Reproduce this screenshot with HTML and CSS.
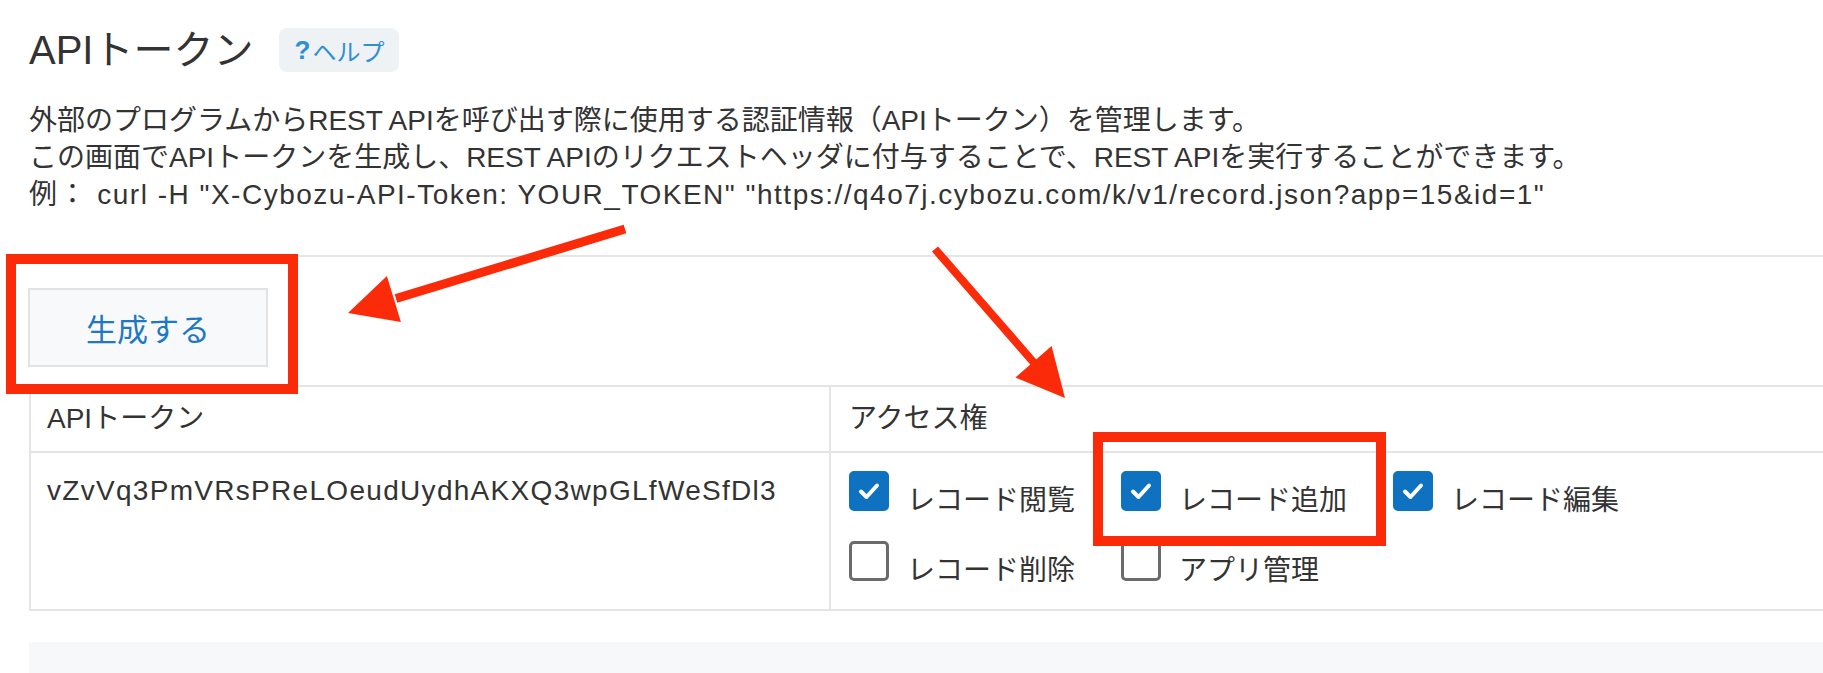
FILE: index.html
```html
<!DOCTYPE html>
<html lang="ja">
<head>
<meta charset="utf-8">
<title>APIトークン</title>
<link rel="stylesheet" href="styles.css">
</head>
<body>
<div class="page">
  <div class="title-row">
    <h1 class="title">APIトークン</h1>
    <a class="help"><span class="help-q">?</span>ヘルプ</a>
  </div>
  <div class="desc">
    <p>外部のプログラムからREST APIを呼び出す際に使用する認証情報（APIトークン）を管理します。</p>
    <p>この画面でAPIトークンを生成し、REST APIのリクエストヘッダに付与することで、REST APIを実行することができます。</p>
    <p class="example">例： curl -H "X-Cybozu-API-Token: YOUR_TOKEN" "https://q4o7j.cybozu.com/k/v1/record.json?app=15&amp;id=1"</p>
  </div>
  <div class="panel">
    <div class="toolbar">
      <button class="gen">生成する</button>
    </div>
    <table class="tokens">
      <thead>
        <tr><th class="col-token">APIトークン</th><th class="col-access">アクセス権</th></tr>
      </thead>
      <tbody>
        <tr>
          <td class="col-token"><span class="token">vZvVq3PmVRsPReLOeudUydhAKXQ3wpGLfWeSfDl3</span></td>
          <td class="col-access">
            <div class="perms">
              <label class="perm"><span class="cb on"><svg viewBox="0 0 40 40"><path d="M12 20.5 L17.5 26 L28 14.5"/></svg></span><span class="perm-label">レコード閲覧</span></label>
              <label class="perm"><span class="cb on"><svg viewBox="0 0 40 40"><path d="M12 20.5 L17.5 26 L28 14.5"/></svg></span><span class="perm-label">レコード追加</span></label>
              <label class="perm"><span class="cb on"><svg viewBox="0 0 40 40"><path d="M12 20.5 L17.5 26 L28 14.5"/></svg></span><span class="perm-label">レコード編集</span></label>
              <label class="perm"><span class="cb"></span><span class="perm-label">レコード削除</span></label>
              <label class="perm"><span class="cb"></span><span class="perm-label">アプリ管理</span></label>
            </div>
          </td>
        </tr>
      </tbody>
    </table>
    <div class="footer-bar"></div>
  </div>

  <svg class="annot" viewBox="0 0 1823 673" width="1823" height="673">
    <line x1="625" y1="229" x2="396" y2="298.5" class="shaft"/>
    <polygon points="348,313 386.9,276.1 400.9,322.1" class="head"/>
    <line x1="935" y1="249" x2="1035" y2="364" class="shaft thin"/>
    <polygon points="1065,398 1051.6,346 1015.4,377.6" class="head"/>
  </svg>
  <div class="mark mark-gen"></div>
  <div class="mark mark-add"></div>
</div>
</body>
</html>
```

FILE: styles.css
```css
html, body {
  margin: 0;
  padding: 0;
  background: #ffffff;
  overflow: hidden;
}

body {
  font-family: "Liberation Sans", "Noto Sans CJK JP", sans-serif;
  color: #333333;
  font-size: 28px;
}

.page {
  position: relative;
  width: 1823px;
  height: 673px;
  padding-left: 29px;
  box-sizing: border-box;
  overflow: hidden;
}

.title-row {
  display: flex;
  align-items: center;
  padding-top: 28px;
  height: 44px;
}

.title {
  margin: 0;
  font-size: 40px;
  font-weight: normal;
  line-height: 44px;
  color: #333333;
}

.help {
  margin-left: 26px;
  height: 44px;
  width: 120px;
  box-sizing: border-box;
  display: flex;
  align-items: center;
  justify-content: center;
  background: #eef2f5;
  border-radius: 8px;
  color: #2f8fd6;
  font-size: 24px;
}

.help-q {
  font-weight: bold;
  font-size: 26px;
  margin-right: 2px;
}

.desc {
  margin-top: 30px;
}

.desc p {
  margin: 0;
  line-height: 37px;
  white-space: nowrap;
}

.example {
  letter-spacing: 1.5px;
}

.token {
  letter-spacing: 1.3px;
}

.panel {
  margin-top: 42px;
}

.toolbar {
  border-top: 2px solid #e5e5e5;
  padding: 31px 0 18px 0;
}

.gen {
  width: 240px;
  height: 79px;
  box-sizing: border-box;
  background: #f7f9fa;
  border: 2px solid #e3e3e3;
  border-radius: 0;
  color: #1f78c1;
  font-family: "Liberation Sans", "Noto Sans CJK JP", sans-serif;
  font-size: 31px;
  padding: 0;
  margin-left: -1px;
}

.tokens {
  border-collapse: collapse;
  width: 1900px;
  table-layout: fixed;
}

.tokens th,
.tokens td {
  border: 2px solid #e5e5e5;
  text-align: left;
  font-weight: normal;
  vertical-align: top;
}

.tokens th {
  height: 64px;
  padding: 0 16px;
  vertical-align: middle;
  line-height: 32px;
}

.tokens .col-token {
  width: 800px;
  box-sizing: border-box;
}

.tokens td {
  height: 158px;
  box-sizing: border-box;
}

.tokens td.col-token {
  padding: 22px 16px 0 16px;
  line-height: 32px;
}

.tokens td.col-access {
  padding: 18px 0 0 18px;
}

.tokens th.col-access {
  padding-left: 18px;
}

.perms {
  display: grid;
  grid-template-columns: repeat(3, 272px);
  row-gap: 30px;
}

.perm {
  display: flex;
  align-items: flex-start;
  height: 40px;
}

.cb {
  width: 40px;
  height: 40px;
  box-sizing: border-box;
  border: 3px solid #6b6b6b;
  border-radius: 5px;
  background: #ffffff;
  flex: none;
}

.cb.on {
  background: #0e72c0;
  border-color: #0e72c0;
}

.cb svg {
  display: block;
  width: 40px;
  height: 40px;
  margin: -3px;
}

.cb svg path {
  fill: none;
  stroke: #ffffff;
  stroke-width: 4;
  stroke-linecap: round;
  stroke-linejoin: round;
}

.perm-label {
  margin-left: 18px;
  line-height: 32px;
  padding-top: 14px;
  white-space: nowrap;
}

.footer-bar {
  margin-top: 31px;
  height: 40px;
  background: #f6f8f9;
  margin-right: -40px;
}

.annot {
  position: absolute;
  left: 0;
  top: 0;
  pointer-events: none;
}

.annot .shaft {
  stroke: #fb2a08;
  stroke-width: 9;
}

.annot .shaft.thin {
  stroke-width: 8;
}

.annot .head {
  fill: #fb2a08;
}

.mark {
  position: absolute;
  border: 10px solid #fb2a08;
  box-sizing: border-box;
  pointer-events: none;
}

.mark-gen {
  left: 6px;
  top: 254px;
  width: 292px;
  height: 140px;
}

.mark-add {
  left: 1093px;
  top: 432px;
  width: 293px;
  height: 114px;
}
```
